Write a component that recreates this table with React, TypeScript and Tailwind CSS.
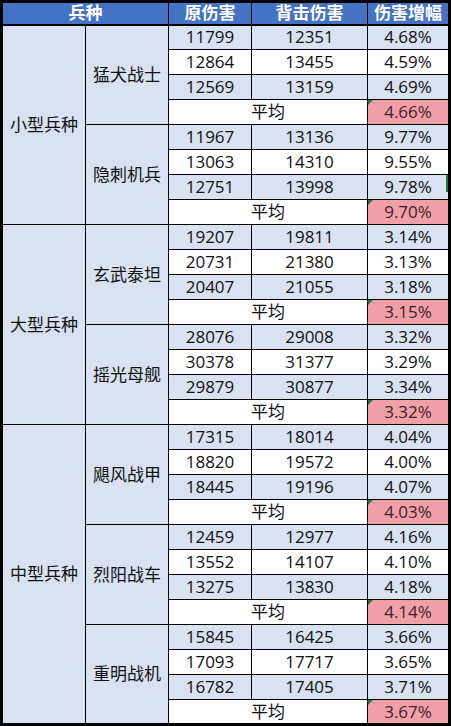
import React from "react";

type Unit = { name: string; rows: [string, string, string][]; avg: string };
type Group = { name: string; units: Unit[] };

const groups: Group[] = [
  {
    name: "小型兵种",
    units: [
      {
        name: "猛犬战士",
        rows: [
          ["11799", "12351", "4.68%"],
          ["12864", "13455", "4.59%"],
          ["12569", "13159", "4.69%"],
        ],
        avg: "4.66%",
      },
      {
        name: "隐刺机兵",
        rows: [
          ["11967", "13136", "9.77%"],
          ["13063", "14310", "9.55%"],
          ["12751", "13998", "9.78%"],
        ],
        avg: "9.70%",
      },
    ],
  },
  {
    name: "大型兵种",
    units: [
      {
        name: "玄武泰坦",
        rows: [
          ["19207", "19811", "3.14%"],
          ["20731", "21380", "3.13%"],
          ["20407", "21055", "3.18%"],
        ],
        avg: "3.15%",
      },
      {
        name: "摇光母舰",
        rows: [
          ["28076", "29008", "3.32%"],
          ["30378", "31377", "3.29%"],
          ["29879", "30877", "3.34%"],
        ],
        avg: "3.32%",
      },
    ],
  },
  {
    name: "中型兵种",
    units: [
      {
        name: "飓风战甲",
        rows: [
          ["17315", "18014", "4.04%"],
          ["18820", "19572", "4.00%"],
          ["18445", "19196", "4.07%"],
        ],
        avg: "4.03%",
      },
      {
        name: "烈阳战车",
        rows: [
          ["12459", "12977", "4.16%"],
          ["13552", "14107", "4.10%"],
          ["13275", "13830", "4.18%"],
        ],
        avg: "4.14%",
      },
      {
        name: "重明战机",
        rows: [
          ["15845", "16425", "3.66%"],
          ["17093", "17717", "3.65%"],
          ["16782", "17405", "3.71%"],
        ],
        avg: "3.67%",
      },
    ],
  },
];

const cell = "border border-black text-center align-middle p-0 h-[25px] leading-[18px] overflow-hidden";
const head = "border border-black border-b-2 text-center align-middle p-0 h-[23px] leading-[18px]";

function App() {
  return (
    <div className="w-[451px] h-[726px] bg-white overflow-hidden">
      <table
        className="border-collapse border-[3px] border-black table-fixed w-[451px] text-[17px] text-[#111]"
        style={{ fontFamily: '"Open Sans", "Noto Sans CJK SC", sans-serif' }}
      >
        <colgroup>
          <col className="w-[84px]" />
          <col className="w-[83px]" />
          <col className="w-[83px]" />
          <col className="w-[116px]" />
          <col className="w-[82px]" />
        </colgroup>
        <thead>
          <tr className="bg-[#4472C4] text-white font-bold">
            <th colSpan={2} className={head}>兵种</th>
            <th className={head}>原伤害</th>
            <th className={head}>背击伤害</th>
            <th className={head}>伤害增幅</th>
          </tr>
        </thead>
        <tbody>
          {groups.map((g) =>
            g.units.map((u, ui) => (
              <React.Fragment key={u.name}>
                {u.rows.map((r, ri) => (
                  <tr key={ri} className={ri === 1 ? "bg-white" : "bg-[#D9E1F2]"}>
                    {ui === 0 && ri === 0 && (
                      <td rowSpan={g.units.length * 4} className={cell + " bg-[#D9E1F2]"}>
                        {g.name}
                      </td>
                    )}
                    {ri === 0 && (
                      <td rowSpan={4} className={cell + " bg-[#D9E1F2]"}>
                        {u.name}
                      </td>
                    )}
                    <td className={cell}>{r[0]}</td>
                    <td className={cell}>{r[1]}</td>
                    <td className={cell + " relative"}>
                      {r[2] === "9.78%" && (
                        <span className="absolute right-0 top-0 w-[2px] h-[17px] bg-[#217346]" />
                      )}
                      {r[2]}
                    </td>
                  </tr>
                ))}
                <tr className="bg-white">
                  <td colSpan={2} className={cell}>平均</td>
                  <td className={cell + " relative bg-[#F2A0A8] text-[#3d2426]"}>
                    <span className="absolute left-0 top-0 w-0 h-0 border-t-[5px] border-r-[5px] border-t-[#1e7a3c] border-r-transparent" />
                    {u.avg}
                  </td>
                </tr>
              </React.Fragment>
            ))
          )}
        </tbody>
      </table>
    </div>
  );
}

export default App;
